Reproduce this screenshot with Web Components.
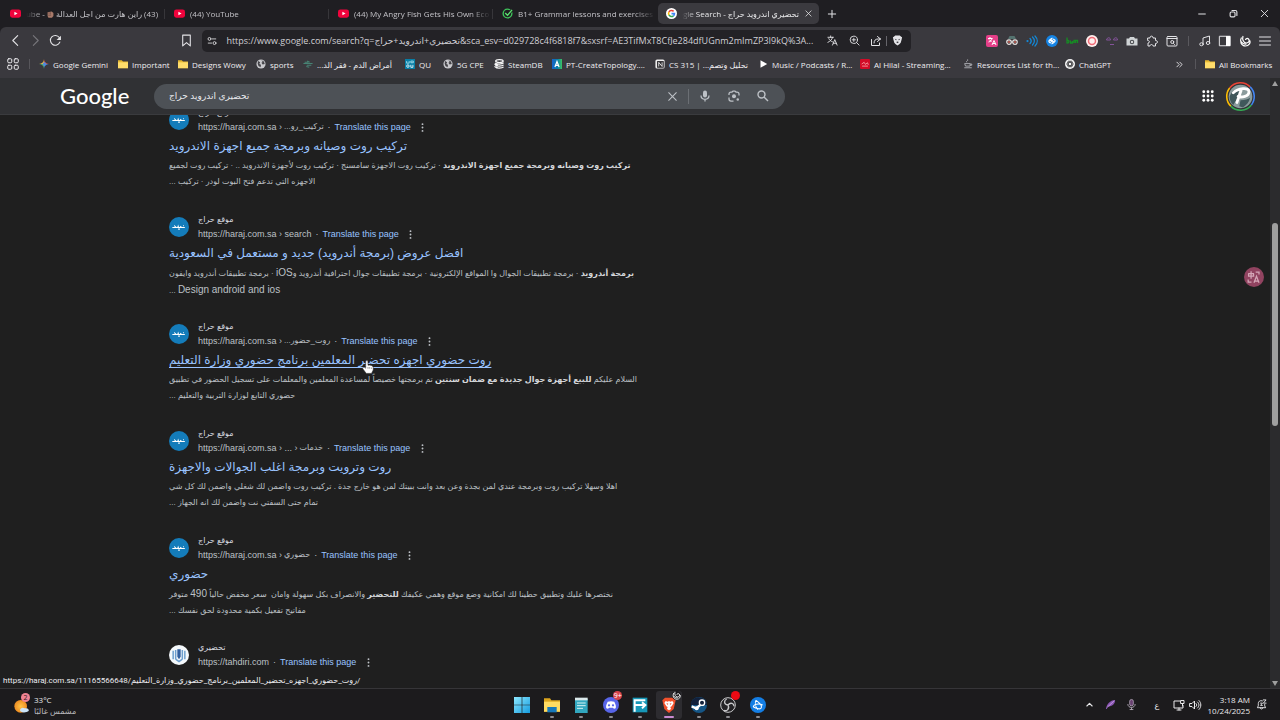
<!DOCTYPE html>
<html lang="en">
<head>
<meta charset="utf-8">
<title>تحضيري اندرويد حراج - Google Search</title>
<style>
html,body{margin:0;height:100%;background:#1f1f1f}
body{font-family:"Open Sans","DejaVu Sans",sans-serif;font-size:8px;color:#e3e3e6}
</style>
</head>
<body>
<browser-window></browser-window>
<script>
const S='fill="none" stroke="currentColor" stroke-width="2" stroke-linecap="round" stroke-linejoin="round"';
const ICONS={
youtube:'<rect x="0" y="3" width="24" height="18" rx="5" fill="#f0033c"/><path d="M9.5 8v8l7-4z" fill="#fff"/>',
check:'<circle cx="12" cy="12" r="9.5" fill="none" stroke="#3fc55b" stroke-width="3"/><path d="M7 11l5 5L22 4" fill="none" stroke="#1f1e22" stroke-width="6"/><path d="M7 11l5 5L22 4" fill="none" stroke="#5be36f" stroke-width="3"/>',
google:'<circle cx="12" cy="12" r="12" fill="#fff"/><g fill="none" stroke-width="3.4"><path d="M16.6 7.4A6.5 6.5 0 0 0 6.4 8.8" stroke="#ea4335"/><path d="M6.4 8.8a6.500 6.500 0 0 0 0 6.400" stroke="#fbbc04"/><path d="M6.400 15.200a6.500 6.500 0 0 0 9.800 1.800" stroke="#34a853"/><path d="M16.200 17a6.500 6.500 0 0 0 2.300-4.700H12" stroke="#4285f4"/></g>',
close:`<path ${S} d="M5 5l14 14M19 5L5 19"/>`,
plus:`<path ${S} d="M12 1v22M1 12h22" style="stroke-width:3"/>`,
min:`<path ${S} d="M2 12h20" style="stroke-width:3"/>`,
restore:`<g ${S} style="stroke-width:3"><rect x="3" y="8" width="13" height="13" rx="3"/><path d="M8 4h9a4 4 0 0 1 4 4v9"/></g>`,
back:`<path ${S} d="M16 3L7 12l9 9"/>`,
fwd:`<path ${S} d="M8 3l9 9-9 9"/>`,
reload:`<path ${S} d="M20 15a9 9 0 1 1-1-8.500"/><path d="M22 3v8h-8z" fill="currentColor"/>`,
bookmark:`<path ${S} d="M5 2h14v20l-7-6-7 6z"/>`,
tune:`<g ${S}><circle cx="6" cy="7" r="3.500"/><path d="M13 7h8M3 17h8"/><circle cx="18" cy="17" r="3.500"/></g>`,
translate:`<g ${S}><path d="M2 5h12M8 2v3M12 5c-1 5-5 9-10 11M4 8c2 4 5 6 8 7M12 22l5-12 5 12M14 18h6"/></g>`,
zoom:`<g ${S}><circle cx="10.500" cy="10.500" r="8"/><path d="M16.500 16.500L22 22M7 10.500h7M10.500 7v7"/></g>`,
share:`<g ${S}><path d="M3 9v12h16v-5M15 3l6 5-6 5M21 8h-5c-5 0-8 3-8 8"/></g>`,
brave:'<path d="M7 1h10l3 3 2 1-1 5-2 7-3 3-4 3-4-3-3-3-2-7-1-5 2-1z" fill="#e4e4e8"/><path d="M6 8l4 1-1 3zM18 8l-4 1 1 3zM9 15l3 3 3-3-3-1z" fill="#37363b"/>',
exT:'<rect width="24" height="24" rx="4" fill="#e43f88"/><path d="M4 7h9M8 4v3M5 14c4-1 6-3 7-7M6 9c1 2 3 3 5 4M12 20l4-9 4 9M13.500 17h5" fill="none" stroke="#fff" stroke-width="2"/>',
spy:'<path d="M4 8l3-6h10l3 6z" fill="#54726f"/><g fill="#2b2a2e" stroke="#e8e0de" stroke-width="2.500"><circle cx="6" cy="14" r="4.500"/><circle cx="18" cy="14" r="4.500"/></g><path d="M10 14h4" stroke="#ddd" stroke-width="2"/><circle cx="6" cy="14" r="1.800" fill="#e06a5c"/><circle cx="18" cy="14" r="1.800" fill="#e06a5c"/>',
sound:'<g fill="none" stroke="#1389d8" stroke-width="2.500" stroke-linecap="round"><circle cx="3" cy="12" r="1"/><path d="M8 7c3 3 3 7 0 10M13 4c5 5 5 11 0 16M18 2c6 6 6 14 0 20"/></g>',
shazam:'<circle cx="12" cy="12" r="12" fill="#1684e4"/><path d="M10 16c-8-3-3-7 3-10M8 9c1 4 4 3 5 6M14 8c8 3 3 7-3 10M16 15c-1-4-4-3-5-6" fill="none" stroke="#fff" stroke-width="2.500"/>',
green:'<path d="M2 5v12M2 11c5-2 5 5 0 5M9 11v5h4v-4M16 16v-5h3v5M19 11h4v5" fill="none" stroke="#168c24" stroke-width="2.600"/>',
ring:'<circle cx="12" cy="12" r="12" fill="#fff0ef"/><circle cx="12" cy="12" r="7" fill="none" stroke="#f16d78" stroke-width="3"/>',
face:'<g fill="none" stroke="#84539b" stroke-width="2"><path d="M1 10c1-6 8-6 8 0zM15 10c1-6 8-6 8 0zM8 19h8"/></g>',
camera:'<path d="M1 7h5l2-3h8l2 3h5v14H1z" fill="#cfd3d5"/><circle cx="12" cy="14" r="4.500" fill="#525458"/><circle cx="12" cy="14" r="2" fill="#fff"/>',
puzzle:`<path ${S} d="M4 6h4c-1-5 7-5 6 0h5v5c5-1 5 7 0 6v5h-5c0-4-6-4-6 0H4v-6c4 0 4-5 0-5z"/>`,
tabsearch:`<g ${S}><rect x="2" y="3" width="20" height="19" rx="2"/><path d="M2 7h20M15 17l2 2"/><circle cx="12.500" cy="14" r="3"/></g>`,
music:`<g ${S}><path d="M8 18V6l13-4v13"/><ellipse cx="5" cy="18.500" rx="3.500" ry="3"/><ellipse cx="18" cy="16" rx="3.500" ry="3"/></g>`,
sidebar:`<rect x="1.500" y="2.500" width="21" height="19" ${S}/><path d="M14 2h8v20h-8z" fill="#fff"/>`,
swirl:'<path d="M5 5C0 13 5 22 13 22c7 0 10-6 9-11M8 2c-2 7 1 14 7 14 5 0 7-5 4-8-2-2-6-1-6 2M4 13c3 4 7 6 11 5" fill="none" stroke="#fff" stroke-width="2.400"/>',
menu:`<path ${S} d="M1 4h22M1 12h22M1 20h22"/>`,
apps4:`<g ${S}><rect x="1.500" y="1.500" width="8" height="8" rx="2"/><rect x="14.500" y="1.500" width="8" height="8" rx="2"/><rect x="1.500" y="14.500" width="8" height="8" rx="2"/><rect x="14.500" y="14.500" width="8" height="8" rx="2"/></g>`,
gemini:'<path d="M12 0c1 8 4 11 12 12H12z" fill="#ed5b55"/><path d="M24 12c-8 1-11 4-12 12V12z" fill="#4797ef"/><path d="M12 24C11 16 8 13 0 12h12z" fill="#4cb574"/><path d="M0 12c8-1 11-4 12-12v12z" fill="#edbd43"/><circle cx="13" cy="12" r="4" fill="#5187dc"/>',
folder:'<path d="M0 3h9l3 3h12v16H0z" fill="#e8b932"/><path d="M0 8h24v14H0z" fill="#ffdd6b"/>',
globe:'<circle cx="12" cy="12" r="11" fill="#c8c8cc"/><path d="M5 5l5 3-2 4 4 2-1 6-5-3-2-6zM13 3l6 3 2 6-5 1-3-4 3-2z" fill="#454449"/>',
dna:'<path d="M1 11h22M4 8h9M9 15h11M10 5l6 3M8 18l7 2" stroke="#478374" stroke-width="2.500" fill="none"/>',
qu:'<rect width="24" height="24" fill="#087ea6"/><path d="M4 5v5h6V5M14 9V5h6v4z" fill="none" stroke="#b0e4ef" stroke-width="2"/><circle cx="7" cy="17" r="3" fill="none" stroke="#fff" stroke-width="2"/><path d="M14 14v6h5v-6" fill="none" stroke="#fff" stroke-width="2"/>',
db:'<g fill="none" stroke="#f7f7f8" stroke-width="3"><ellipse cx="13" cy="5" rx="9" ry="3.500"/><path d="M3 9c3 4 16 4 20 0M3 14c3 4 16 4 20 0M3 19c3 4 16 4 20 0M1 12l8 4M1 18l8 3"/></g>',
pt:'<defs><linearGradient id="g"><stop stop-color="#1762c8"/><stop offset=".55" stop-color="#087eac"/><stop offset="1" stop-color="#3dc45f"/></linearGradient></defs><rect width="24" height="24" fill="url(#g)"/><path d="M7 19l5-13 5 13M9 15h6" stroke="#fff" stroke-width="3" fill="none"/>',
notion:'<rect x="1" y="1" width="22" height="22" rx="4" fill="#eee"/><rect x="5" y="5" width="16" height="16" fill="#29282b"/><path d="M9 18V8l8 10V8" fill="none" stroke="#fff" stroke-width="2"/>',
play:'<path d="M6 3l16 9-16 9z" fill="#fff"/>',
hilal:'<rect width="24" height="24" rx="3" fill="#d20b27"/><path d="M4 12l6-4 3 5 5-4 2 5M5 17h14" fill="none" stroke="#f9a5a8" stroke-width="2"/>',
java:'<path d="M4 11h13v6H6zM17 12h4v3h-4M3 21h18M9 8c-3-3 5-4 2-7" fill="none" stroke="#b9bbc0" stroke-width="2"/>',
gpt:'<circle cx="12" cy="12" r="12" fill="#f4f4f5"/><g fill="none" stroke="#38383b" stroke-width="1.800"><ellipse cx="12" cy="12" rx="8" ry="4"/><ellipse cx="12" cy="12" rx="8" ry="4" transform="rotate(60 12 12)"/><ellipse cx="12" cy="12" rx="8" ry="4" transform="rotate(120 12 12)"/></g>',
more:`<path ${S} d="M3 4l8 8-8 8M13 4l8 8-8 8" style="stroke-width:3"/>`,
fist:'<path d="M2 4l14-2 6 5v10l-5 6H5L2 17z" fill="#a87a6a"/><path d="M7 4v8M12 4v8M4 15h10" stroke="#6a4840" stroke-width="2"/>',
mic:'<rect x="8" y="1" width="8" height="14" rx="4" fill="currentColor"/><path d="M4 11c0 10 16 10 16 0M12 18v5" fill="none" stroke="currentColor" stroke-width="2.500"/>',
lens:'<g fill="none" stroke="currentColor" stroke-width="2.500"><path d="M2 10V8a4 4 0 0 1 4-4h2l2-2h4l2 2h2a4 4 0 0 1 4 4v3M2 15v3a4 4 0 0 0 4 4h5"/></g><circle cx="12" cy="12.500" r="4" fill="currentColor"/><circle cx="19.500" cy="19" r="2.500" fill="currentColor"/>',
search:`<g fill="none" stroke="currentColor" stroke-width="2.800"><circle cx="9" cy="9" r="7"/><path d="M14 14l8 8"/></g>`,
dots9:'<g fill="#fff"><circle cx="3.500" cy="3.500" r="2.800"/><circle cx="12" cy="3.500" r="2.800"/><circle cx="20.500" cy="3.500" r="2.800"/><circle cx="3.500" cy="12" r="2.800"/><circle cx="12" cy="12" r="2.800"/><circle cx="20.500" cy="12" r="2.800"/><circle cx="3.500" cy="20.500" r="2.800"/><circle cx="12" cy="20.500" r="2.800"/><circle cx="20.500" cy="20.500" r="2.800"/></g>',
kebab:'<g fill="#bdc1c6"><circle cx="12" cy="3" r="2.500"/><circle cx="12" cy="12" r="2.500"/><circle cx="12" cy="21" r="2.500"/></g>',
avatar:'<g fill="none" stroke-width="1.300"><path d="M3 5a11.300 11.300 0 0 1 17-1" stroke="#ea4335"/><path d="M20 4a11.300 11.300 0 0 1 1 15" stroke="#4285f4"/><path d="M21 19a11.300 11.300 0 0 1-17 1" stroke="#34a853"/><path d="M4 20A11.300 11.300 0 0 1 3 5" stroke="#fbbc04"/></g><circle cx="12" cy="12" r="9.800" fill="#8b9c9d"/><path d="M3 12c2-5 5-6 8-6l-2 8-3 5c-2-2-3-4-3-7zM12 15c4 0 6-1 8-2-1 4-3 6-6 8l-3-1z" fill="#40585b"/><path d="M6 9c4-4 13-5 13-1s-6 5-9 4M12.500 7L9 17" fill="none" stroke="#fff" stroke-width="2.300" stroke-linecap="round"/>',
haraj:'<circle cx="12" cy="12" r="12" fill="#147cba"/><path d="M4 12.500h3l.5-1 1 1h2l.5-1.500.5 1.500h2l.5-1 1 1h4M11 14.500h2M17 10.500h1M6 10.500h1" fill="none" stroke="#fff" stroke-width="1.300"/>',
tahdiri:'<circle cx="12" cy="12" r="12" fill="#f5f9fc"/><path d="M5 7v10M8 6v11M16 6v11M19 7v10M8 17l4 3 4-3" fill="none" stroke="#6d9fce" stroke-width="1.800"/><path d="M10 5h4v9l-2 3-2-3z" fill="#315f9f"/>',
bubble:'<circle cx="12" cy="12" r="12" fill="#914360"/><path d="M5 8h7M8.500 5v9M5.500 8v3h6V8M14 6h4v3M5 15v3h4M12 19l3-8 3 8M13 17h4" fill="none" stroke="#d4a7b7" stroke-width="1.500"/>',
hand:'<path d="M8 12V3c0-3 4-3 4 0v6c4-1 9 1 9 4v4l-3 6H9l-6-8c-1-3 3-3 5-1z" fill="#fff" stroke="#222" stroke-width="1"/><path d="M12 12v3M15 12v3M18 13v2" stroke="#555"/>',
weather:'<defs><radialGradient id="w"><stop stop-color="#ffc448"/><stop offset="1" stop-color="#ed8d22"/></radialGradient></defs><circle cx="10" cy="14" r="9.500" fill="url(#w)"/><path d="M9 20c0-4 5-5 7-3 5-1 7 2 6 4-3 3-13 3-13-1z" fill="#cbe4f8"/>',
win:'<defs><linearGradient id="b" x2="1" y2="1"><stop stop-color="#8de8ff"/><stop offset="1" stop-color="#159cdf"/></linearGradient></defs><path d="M0 0h11.500v11.500H0zM12.500 0H24v11.500H12.500zM0 12.500h11.500V24H0zM12.500 12.500H24V24H12.500z" fill="url(#b)"/>',
explorer:'<path d="M0 2h9l2 3h13v17H0z" fill="#dba51d"/><path d="M0 7h24v15H0z" fill="#ffdc62"/><path d="M5 15h14v8H5z" fill="#1779bb"/>',
notes:'<path d="M3 3h19v21H3z" fill="#32a7bf"/><path d="M3 1h19v4H3z" fill="#dbe9eb"/><path d="M6 9h13M6 13h13M6 17h9" stroke="#d5f2f4" stroke-width="1.500"/>',
discord:'<circle cx="12" cy="12" r="12" fill="#5865e8"/><path d="M7 7c3-1 7-1 10 0 2 4 3 7 2 10-2 1-3 1-4-1H9c-1 2-2 2-4 1-1-3 0-6 2-10z" fill="#fff"/><circle cx="9" cy="12.500" r="1.700" fill="#5865e8"/><circle cx="15" cy="12.500" r="1.700" fill="#5865e8"/>',
ftool:'<path d="M1 1h22v22H1z" fill="#1798b8"/><path d="M4 22V5h16M4 12h16M15 8l5 4-5 5" fill="none" stroke="#fff" stroke-width="3"/>',
bravec:'<path d="M6 1h12l4 4-3 13-7 6-7-6L2 5z" fill="#f2512c"/><path d="M7 6l3 1 2-1 2 1 3-1 2 3-3 5-2 1 1 3-3 2-3-2 1-3-2-1-3-5z" fill="#fff"/><path d="M8 9l3 1-1 2zM16 9l-3 1 1 2z" fill="#f2512c"/>',
steam:'<circle cx="12" cy="12" r="12" fill="#155585"/><path d="M0 9c5-14 24-9 24 3H0z" fill="#12213b"/><path d="M1 14l7 3 8-7" stroke="#fff" stroke-width="3.500" fill="none"/><circle cx="16.500" cy="8.500" r="4" fill="#12213b" stroke="#fff" stroke-width="2"/><circle cx="8.500" cy="17" r="3" fill="#fff"/>',
obs:'<circle cx="12" cy="12" r="11" fill="#242326" stroke="#c9c9cb" stroke-width="1.500"/><path d="M12 12c-7-1-6-7-2-9M12 12c4-5 9-2 9 2M12 12c3 6-2 10-6 8" fill="none" stroke="#c9c9cb" stroke-width="2"/>',
bnet:'<circle cx="12" cy="12" r="12" fill="#147ee4"/><path d="M9 5c6 4 9 8 8 11s-6 2-12-1M9 5c-2 4-1 10 3 14M5 15c0-4 8-6 14-3" fill="none" stroke="#fff" stroke-width="1.600"/>',
up:`<path ${S} d="M5 16l7-7 7 7" style="stroke-width:3"/>`,
quill:'<path d="M2 22C4 10 11 3 22 2c0 9-6 13-16 15l-2 5z" fill="#8b56b4"/><path d="M5 18L20 4" stroke="#d5b0ea" stroke-width="1.500"/>',
micp:'<rect x="8" y="1" width="8" height="14" rx="4" fill="#684070" stroke="#c1b6c6" stroke-width="1.500"/><path d="M4 11c0 10 16 10 16 0M12 19v4M8 23h8" fill="none" stroke="#c1b6c6" stroke-width="1.800"/>',
net:`<g ${S}><path d="M14 4H2v14h18v-5M8 22h8M12 18v4M16 3h6v6h-6zM19 9v5"/></g>`,
vol:`<g ${S}><path d="M2 9h4l5-5v16l-5-5H2zM14 9c2 2 2 4 0 6M17 6c4 4 4 8 0 12M20 3c5 5 5 13 0 18"/></g>`,
bell:`<g ${S}><path d="M14 4C8 2 5 6 5 10v5l-2 4h18l-2-4v-3M9 19c0 4 6 4 6 0M16 2h6l-6 7h6M10 9h4l-4 5h4"/></g>`
};
const define=(name,html)=>customElements.define(name,class extends HTMLElement{
  connectedCallback(){
    if(this.shadowRoot)return;
    const t=document.createElement('template');
    t.innerHTML=typeof html==='function'?html(this):html;
    this.attachShadow({mode:'open'}).append(t.content.cloneNode(true));
  }
});
const at=(e,n,d='')=>e.getAttribute(n)??d;
const reset=`:host,*{box-sizing:border-box}button,input{font:inherit;color:inherit;background:none;border:0;padding:0;margin:0;outline:0}button{display:flex;align-items:center;justify-content:center}a{color:inherit;text-decoration:none}`;

define('ui-icon',e=>`<style>:host{display:block;flex:none;line-height:0}svg{display:block;overflow:visible}</style><svg width="${at(e,'size',12)}" height="${at(e,'size',12)}" viewBox="0 0 24 24" aria-hidden="true">${ICONS[at(e,'name')]}</svg>`);

define('icon-button',e=>`<style>${reset}:host{display:block;flex:none;width:20px}button{width:100%;height:20px}</style><button type="button" aria-label="${at(e,'label',at(e,'name'))}"><ui-icon name="${at(e,'name')}" size="${at(e,'size',12)}"></ui-icon></button>`);

define('browser-tab',e=>`<style>${reset}
:host{display:block;width:164px;height:21px;color:#c3c2c7}
.tab{display:flex;align-items:center;gap:5px;width:161px;height:21px;padding:0 0 0 8px;border-radius:5px}
:host([active]) .tab{background:#3b3a3f;color:#e8e8ea;padding-right:6px}
:host([line]){background:linear-gradient(#37363a,#37363a) right 1px center/1px 10px no-repeat}
:host([rtl]:not([active])) .tab{padding-right:5px}
.t{flex:1;white-space:nowrap;overflow:hidden;mask-image:linear-gradient(90deg,#000 85%,transparent)}
:host([rtl]) .t{direction:rtl;mask-image:linear-gradient(270deg,#000 88%,transparent)}
</style><div class="tab" role="tab"><ui-icon name="${at(e,'icon')}" size="11"></ui-icon><div class="t"><slot></slot></div>${e.hasAttribute('active')?'<button type="button" aria-label="Close tab"><ui-icon name="close" size="9"></ui-icon></button>':''}</div>`);

define('tab-strip',`<style>${reset}
:host{display:flex;flex:none;align-items:center;height:27px;padding-left:2px;background:#1f1e22}
.sp{flex:1}.win{display:flex;gap:11px;padding-right:6px}ui-icon{display:inline-block;vertical-align:middle}
</style>
<browser-tab icon="youtube" rtl line>(43) راين هارت من اجل العدالة <ui-icon name="fist" size="7"></ui-icon> - ube</browser-tab>
<browser-tab icon="youtube" line>(44) YouTube</browser-tab>
<browser-tab icon="youtube" line>(44) My Angry Fish Gets His Own Eco</browser-tab>
<browser-tab icon="check">B1+ Grammar lessons and exercises -</browser-tab>
<browser-tab icon="google" rtl active>تحضيري اندرويد حراج - ogle Search</browser-tab>
<icon-button name="plus" size="8" label="New tab"></icon-button>
<div class="sp"></div>
<div class="win"><icon-button name="min" size="8" label="Minimize"></icon-button><icon-button name="restore" size="9" label="Restore"></icon-button><icon-button name="close" size="11" label="Close"></icon-button></div>`);

define('tool-bar',`<style>${reset}
:host{display:flex;flex:none;align-items:center;height:27px;padding:0 5px;background:#3a393e;border-top-left-radius:6px;border-top-right-radius:6px}
.g{display:flex;align-items:center}.s1{flex:112}.s2{flex:71}
.box{flex:709;display:flex;align-items:center;height:22px;margin-left:6px;padding-right:4px;background:#232226;border-radius:5px}
input{flex:1;min-width:0;font-size:9px;margin-left:4px;text-overflow:ellipsis;color:#d0cfd5}
.r{display:flex;gap:2px}.sep{width:1px;height:10px;background:#66656b}
.sep.b{margin:0 6px;background:#5a595e}.dim{color:#77767b}
</style>
<div class="g"><icon-button name="back" size="13" label="Back"></icon-button><icon-button class="dim" name="fwd" size="13" label="Forward"></icon-button><icon-button name="reload" size="13" label="Reload"></icon-button></div>
<div class="s1"></div><icon-button name="bookmark" size="13" label="Bookmark"></icon-button>
<div class="box"><icon-button name="tune" size="10" label="Site information"></icon-button>
<input aria-label="Address" value="https://www.google.com/search?q=تحضيري+اندرويد+حراج&amp;sca_esv=d029728c4f6818f7&amp;sxsrf=AE3TifMxT8CfJe284dfUGnm2mImZP3I9kQ%3A...">
<div class="g r"><icon-button name="translate" size="11" label="Translate"></icon-button><icon-button name="zoom" size="11" label="Zoom"></icon-button><icon-button name="share" size="12" label="Share"></icon-button></div><div class="sep"></div><icon-button name="brave" size="11" label="Shields"></icon-button></div>
<div class="s2"></div>
<div class="g">${['exT','spy','sound','shazam','green','ring','face','camera','puzzle','tabsearch'].map(n=>`<icon-button name="${n}" size="12"></icon-button>`).join('')}</div><div class="sep b"></div>
<div class="g">${['music','sidebar','swirl','menu'].map(n=>`<icon-button name="${n}" size="12"></icon-button>`).join('')}</div>`);

define('book-mark',e=>`<style>${reset}:host{display:block;flex:none;width:${at(e,'w')}px}a{display:flex;align-items:center;gap:4px;white-space:nowrap}</style><a href="#"><ui-icon name="${at(e,'icon')}" size="10"></ui-icon><span><slot></slot></span></a>`);

const MARKS=[['gemini',79,'Google Gemini'],['folder',60,'Important'],['folder',78,'Designs Wowy'],['globe',47,'sports'],['dna',102,'<bdi dir="rtl">أمراض الدم - فقر الد...</bdi>'],['qu',38,'QU'],['globe',51,'5G CPE'],['db',58,'SteamDB'],['pt',103,'PT-CreateTopology....'],['notion',103,'CS 315 | <bdi dir="rtl">تحليل وتصم...</bdi>'],['play',102,'Music / Podcasts / R...'],['hilal',103,'Al Hilal - Streaming...'],['java',102,'Resources List for th...'],['gpt',60,'ChatGPT']];
define('bookmarks-bar',`<style>${reset}
:host{display:flex;flex:none;align-items:center;height:24px;padding:0 4px 4px 3px;background:#3a393e;color:#eeedf0}
.sep{flex:none;width:1px;height:10px;background:#57565b;margin:0 9px 0 6px}.sp{flex:1}
</style><icon-button name="apps4" size="12" label="All apps"></icon-button><div class="sep"></div>
${MARKS.map(m=>`<book-mark icon="${m[0]}" w="${m[1]}">${m[2]}</book-mark>`).join('')}
<div class="sp"></div><icon-button name="more" size="7" label="More bookmarks"></icon-button><div class="sep"></div><book-mark icon="folder" w="71">All Bookmarks</book-mark>`);

define('search-header',`<style>${reset}
:host{display:flex;flex:none;align-items:center;height:37px;padding:0 15px 0 60px;background:#303134;border-bottom:1px solid #3a3b3e;color:#bdc1c6}
.logo{width:94px;font:500 22px/26px Lato,sans-serif;color:#fff}
form{display:flex;align-items:center;width:631px;height:25px;border-radius:13px;background:#4d5156;padding:0 12px 0 15px}
input{flex:1;min-width:0;font:9px "Liberation Sans","DejaVu Sans",sans-serif;color:#e8eaed}
form div{width:1px;height:15px;background:#6b6f74;margin:0 6px}
.sp{flex:1}.i{display:flex;gap:9px}.a{margin-left:8px}
</style><a class="logo" href="#">Google</a>
<form onsubmit="return false"><input aria-label="Search" value="تحضيري اندرويد حراج"><icon-button name="close" size="13" label="Clear"></icon-button><div></div><span class="i"><icon-button name="mic" size="12"></icon-button><icon-button name="lens" size="12"></icon-button><icon-button name="search" size="12"></icon-button></span></form>
<div class="sp"></div><icon-button name="dots9" label="Google apps"></icon-button><a class="a" href="#" aria-label="Account"><ui-icon name="avatar" size="29"></ui-icon></a>`);

define('search-result',e=>`<style>${reset}
:host{display:block;margin-bottom:23px;font-family:"Liberation Sans","DejaVu Sans",sans-serif;color:#bdc1c6}
.head{display:flex;align-items:center;gap:9px;height:28px}
.n,.u{height:14px;line-height:14px;white-space:nowrap}.n{font-size:8px;color:#dadce0}
.u{display:flex;align-items:center;font-size:9px}
.u a{color:#99c3ff;margin-left:4px}.u button{width:16px;height:12px;margin-left:4px}
.u i{font-style:normal;margin-left:4px}
::slotted([slot=path]){font-size:8px;margin-left:2px}
h3{height:24px;margin:0;font-weight:400;font-size:12px;line-height:24px;color:#99c3ff;white-space:nowrap}
:host([hover]) h3{text-decoration:underline;text-decoration-thickness:1px;text-underline-offset:3px}
.s{direction:rtl;text-align:left;font-size:8px;line-height:16px;height:32px;white-space:nowrap}
</style><div class="head"><ui-icon name="${at(e,'icon','haraj')}" size="20"></ui-icon><div><div class="n">${at(e,'site')}</div><div class="u"><span>${at(e,'url')}</span><slot name="path"></slot><i>·</i><a href="#">Translate this page</a><button type="button" aria-label="About this result"><ui-icon name="kebab" size="9"></ui-icon></button></div></div></div>
${e.hasAttribute('last')?'':'<h3><a href="#"><slot name="title"></slot></a></h3><div class="s"><slot></slot></div>'}`);

define('results-page',`<style>${reset}
:host{display:flex;flex:1;min-height:0;position:relative;overflow:hidden;background:#1f1f1f}
main{flex:1;display:flex;flex-direction:column;min-width:0}
.list{flex:1;min-height:0;overflow:hidden;padding-left:169px}.in{margin-top:-9px}
b{color:#d5d7da}.en{font-size:10px;font-family:"Liberation Sans",sans-serif}
.bar{width:10px;background:#2b2b2d;display:flex;flex-direction:column;align-items:center;padding:3px 0 2px}
.up,.dn{border:3px solid transparent;height:0}.up{border-top:0;border-bottom:5px solid #9f9f9f}.dn{border-bottom:0;border-top:5px solid #9f9f9f}
.g1{flex:136}.th{flex:202;width:6px;border-radius:3px;background:#9f9f9f}.g2{flex:254}
.status{position:absolute;left:0;bottom:0;height:14px;line-height:14px;padding:0 4px 0 3px;background:#1f1f1f;color:#ececef;white-space:nowrap;font-family:Roboto,"DejaVu Sans",sans-serif}
.cur{position:absolute;left:361px;top:282px}.bub{position:absolute;right:16px;top:189px}
</style><main><search-header></search-header><div class="list"><div class="in">
<search-result site="موقع حراج" url="https://haraj.com.sa ›"><span slot="path" dir="rtl">تركيب_رو...</span><span slot="title">تركيب روت وصيانه وبرمجة جميع اجهزة الاندرويد</span><b>تركيب روت وصيانه وبرمجة جميع اجهزة الاندرويد</b> · تركيب روت الاجهزة سامسنج · تركيب روت لأجهزة الاندرويد .. · تركيب روت لجميع<br>الاجهزه التي تدعم فتح البوت لودر · تركيب ...</search-result>
<search-result site="موقع حراج" url="https://haraj.com.sa › search"><span slot="title">افضل عروض (برمجة أندرويد) جديد و مستعمل في السعودية</span><b>برمجة أندرويد</b> · برمجة تطبيقات الجوال وا المواقع الإلكترونية · برمجة تطبيقات جوال احترافية أندرويد و<span class="en">iOS</span> · برمجة تطبيقات أندرويد وايفون<br><span class="en">Design android and ios</span> ...</search-result>
<search-result hover site="موقع حراج" url="https://haraj.com.sa ›"><span slot="path" dir="rtl">روت_حضور...</span><span slot="title">روت حضوري اجهزه تحضير المعلمين برنامج حضوري وزارة التعليم</span>السلام عليكم <b>للبيع أجهزة جوال جديدة مع ضمان سنتين</b> تم برمجتها خصيصاً لمساعدة المعلمين والمعلمات على تسجيل الحضور في تطبيق<br>حضوري التابع لوزارة التربية والتعليم ...</search-result>
<search-result site="موقع حراج" url="https://haraj.com.sa › ... ›"><span slot="path" dir="rtl">خدمات</span><span slot="title">روت وترويت وبرمجة اغلب الجوالات والاجهزة</span>اهلا وسهلا تركيب روت وبرمجة عندي لمن بجدة وعن بعد وانت ببيتك لمن هو خارج جدة . تركيب روت واضمن لك شغلي واضمن لك كل شي<br>تمام حتى السفتي نت واضمن لك انه الجهاز ...</search-result>
<search-result site="موقع حراج" url="https://haraj.com.sa ›"><span slot="path" dir="rtl">حضوري</span><span slot="title">حضوري</span>نختصرها عليك وتطبيق حطينا لك امكانية وضع موقع وهمي عكيفك <b>للتحضير</b> والانصراف بكل سهولة وامان&nbsp; سعر مخفض حالياً <span class="en">490</span> متوفر<br>مفاتيح تفعيل بكمية محدودة لحق نفسك ...</search-result>
<search-result last icon="tahdiri" site="تحضيري" url="https://tahdiri.com"></search-result>
</div></div></main>
<div class="bar"><div class="up"></div><div class="g1"></div><div class="th"></div><div class="g2"></div><div class="dn"></div></div>
<ui-icon class="cur" name="hand" size="14"></ui-icon><ui-icon class="bub" name="bubble" size="20"></ui-icon>
<div class="status">https://haraj.com.sa/11165566648/روت_حضوري_اجهزه_تحضير_المعلمين_برنامج_حضوري_وزارة_التعليم/</div>`);

define('task-item',e=>`<style>${reset}:host{display:block;flex:1;height:30px;position:relative}button{width:22px;height:28px;margin:1px auto 0;border-radius:3px}:host([active]) button{background:#2d2c30;width:26px}
:host([run])::after{content:"";position:absolute;left:50%;margin-left:-2px;bottom:2px;width:4px;height:2px;border-radius:1px;background:#8d8c90}
:host([active])::after{width:10px;margin-left:-5px;background:#c88ad0}
.b{position:absolute;right:3px;top:1px;min-width:9px;height:9px;border-radius:5px;background:#d8434c;color:#fff;font-size:7px;line-height:9px;text-align:center}
.b.d{background:#ed0a14}.b.s{background:#19181b}</style><button type="button" aria-label="${at(e,'name')}"><ui-icon name="${at(e,'name')}" size="16"></ui-icon></button>${e.hasAttribute('badge')?`<span class="b ${at(e,'kind')}">${at(e,'kind')=='s'?'<ui-icon name="swirl" size="9"></ui-icon>':at(e,'badge')}</span>`:''}`);

define('task-bar',`<style>${reset}
:host{display:grid;flex:none;grid-template-columns:1fr 265px 1fr;align-items:center;height:32px;background:#1c1b1d;border-top:1px solid #363538;color:#e9e9eb}
.w{display:flex;align-items:center;gap:4px;padding-left:14px;position:relative;line-height:11px}.w small{display:block;font-size:8px;color:#b9b9bc}
.bd{position:absolute;left:21px;top:-1px;width:9px;height:9px;border-radius:5px;background:#f08393;color:#301820;font-size:7px;line-height:9px;text-align:center}
.m{display:flex}.r{display:flex;align-items:center;justify-content:flex-end;padding-right:9px}
.r span{width:28px;text-align:center}.c{width:47px;text-align:right;line-height:11px;margin-right:1px}
.p{display:flex;gap:1px;margin-right:2px}.q{display:flex}.q icon-button{width:16px}
</style>
<div class="w"><ui-icon name="weather" size="16"></ui-icon><span class="bd">2</span><div>33°C<small>مشمس غالبًا</small></div></div>
<div class="m"><task-item name="win"></task-item><task-item name="explorer" run></task-item><task-item name="notes" run></task-item><task-item name="discord" run badge="9+"></task-item><task-item name="ftool" run></task-item><task-item name="bravec" run active badge="" kind="s"></task-item><task-item name="steam" run></task-item><task-item name="obs" run badge="" kind="d"></task-item><task-item name="bnet" run></task-item></div>
<div class="r"><div class="p"><icon-button name="up" size="9"></icon-button><icon-button name="quill" size="11"></icon-button><icon-button name="micp" size="11"></icon-button></div><span>ع</span><div class="q"><icon-button name="net"></icon-button><icon-button name="vol"></icon-button></div><div class="c">3:18 AM<br>10/24/2025</div><icon-button name="bell" size="11"></icon-button></div>`);

define('browser-window',`<style>:host{display:flex;flex-direction:column;height:100vh;background:#1f1e22}</style><tab-strip></tab-strip><tool-bar></tool-bar><bookmarks-bar></bookmarks-bar><results-page></results-page><task-bar></task-bar>`);
</script>
</body>
</html>
